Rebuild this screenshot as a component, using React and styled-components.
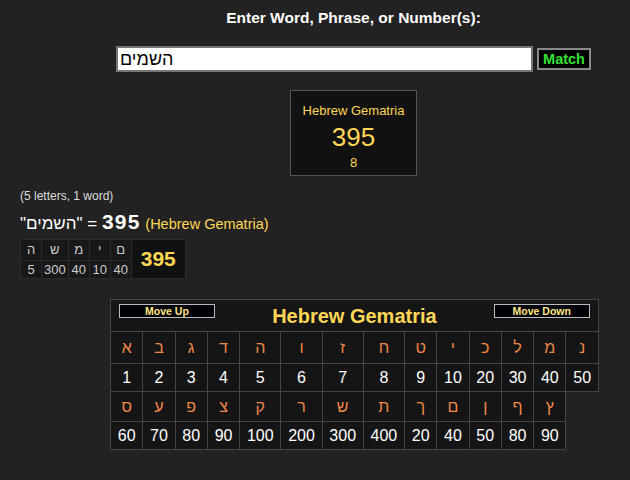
import React from "react";
import styled, { createGlobalStyle } from "styled-components";

const GlobalStyle = createGlobalStyle`
  html, body { margin: 0; padding: 0; background: #222222; }
  body { font-family: "Liberation Sans", Arial, "DejaVu Sans", sans-serif; color: #ffffff; }
`;

const Page = styled.div`
  padding-top: 9px;
  width: 630px;
  height: 480px;
  box-sizing: border-box;
  overflow: hidden;
`;

const CenterCol = styled.div`
  margin-left: 77px;
  display: flex;
  flex-direction: column;
  align-items: center;
`;

const Heading = styled.div`
  font-size: 15.5px;
  font-weight: bold;
  line-height: 18px;
  color: #ffffff;
`;

const SearchRow = styled.div`
  margin-top: 19px;
  display: flex;
  align-items: center;
  gap: 4px;
`;

const WordInput = styled.input`
  width: 417px;
  height: 26px;
  box-sizing: border-box;
  border: 2px solid #767676;
  background: #ffffff;
  color: #000000;
  font-family: "Liberation Sans", Arial, "DejaVu Sans", sans-serif;
  font-size: 18px;
  padding: 0 2px;
  outline: none;
`;

const MatchButton = styled.button`
  width: 54px;
  height: 22px;
  box-sizing: border-box;
  background: #000000;
  border: 2px solid #8a8a8a;
  color: #33e033;
  font-family: "Liberation Sans", Arial, sans-serif;
  font-weight: bold;
  font-size: 14.5px;
  padding: 0;
  line-height: 18px;
`;

const GemBox = styled.div`
  margin-top: 18px;
  width: 127px;
  height: 86px;
  box-sizing: border-box;
  border: 1px solid #555555;
  background: #111111;
  display: flex;
  flex-direction: column;
  align-items: center;
  padding-top: 12px;
  color: #ffd755;
`;

const GemLabel = styled.div`
  font-size: 13px;
  line-height: 15px;
`;

const GemValue = styled.div`
  font-size: 26px;
  line-height: 28px;
  margin-top: 5px;
`;

const GemSub = styled.div`
  font-size: 13px;
  line-height: 15px;
  margin-top: 4px;
`;

const Left = styled.div`
  padding-left: 20px;
  margin-top: 13px;
`;

const Info = styled.div`
  font-size: 12px;
  line-height: 14px;
  color: #dddddd;
`;

const ResultLine = styled.div`
  margin-top: 8px;
  font-size: 17px;
  line-height: 22px;
  color: #ffffff;
`;

const HebrewWord = styled.bdi`
  unicode-bidi: isolate;
`;

const BigNum = styled.span`
  font-size: 21px;
  font-weight: bold;
  letter-spacing: 1.2px;
`;

const CipherName = styled.span`
  font-size: 14.5px;
  color: #ffd755;
`;

const Breakdown = styled.table`
  margin-top: 4px;
  border-collapse: separate;
  border-spacing: 1px;
  background: #2a2a2a;
`;

const BdCell = styled.td`
  background: #181818;
  color: #cccccc;
  font-size: 13px;
  text-align: center;
  padding: 0 2px;
  min-width: 16px;
  height: ${(p) => (p.$top ? "20px" : "17px")};
  line-height: 16px;
`;

const BdTotal = styled.td`
  background: #111111;
  color: #ffd755;
  font-size: 21px;
  font-weight: bold;
  text-align: center;
  padding: 0 9px;
`;

const TableWrap = styled.div`
  margin-top: 20px;
  margin-left: 110px;
`;

const Chart = styled.table`
  border-collapse: collapse;
`;

const HeadCell = styled.td`
  background: #151515;
  border: 1px solid #444444;
  height: 31px;
  padding: 0;
`;

const HeadInner = styled.div`
  display: flex;
  justify-content: space-between;
  align-items: flex-start;
  padding: 0 8px;
  height: 31px;
`;

const MoveButton = styled.button`
  margin-top: 4px;
  width: 96px;
  height: 14px;
  box-sizing: border-box;
  background: #000008;
  border: 1px solid #bbbbbb;
  color: #ffe680;
  font-family: "Liberation Sans", Arial, sans-serif;
  font-weight: bold;
  font-size: 10.5px;
  line-height: 12px;
  padding: 0;
`;

const Title = styled.div`
  align-self: center;
  font-size: 20px;
  font-weight: bold;
  color: #ffd755;
  margin-top: 2px;
`;

const LetterCell = styled.td`
  background: #151515;
  border: 1px solid #444444;
  color: #f08848;
  font-size: 16px;
  text-align: center;
  padding: 0 6.75px;
  height: ${(p) => p.$h}px;
`;

const NumCell = styled.td`
  background: #151515;
  border: 1px solid #444444;
  color: #ffffff;
  font-size: 16px;
  text-align: center;
  padding: 0 6.75px;
  height: 27px;
`;

const row1 = [
  ["א", 1], ["ב", 2], ["ג", 3], ["ד", 4], ["ה", 5], ["ו", 6], ["ז", 7],
  ["ח", 8], ["ט", 9], ["י", 10], ["כ", 20], ["ל", 30], ["מ", 40], ["נ", 50],
];
const row2 = [
  ["ס", 60], ["ע", 70], ["פ", 80], ["צ", 90], ["ק", 100], ["ר", 200], ["ש", 300],
  ["ת", 400], ["ך", 20], ["ם", 40], ["ן", 50], ["ף", 80], ["ץ", 90],
];
const word = [["ה", 5], ["ש", 300], ["מ", 40], ["י", 10], ["ם", 40]];

export default function App() {
  return (
    <>
      <GlobalStyle />
      <Page>
        <CenterCol>
          <Heading>Enter Word, Phrase, or Number(s):</Heading>
          <SearchRow>
            <WordInput defaultValue="השמים" />
            <MatchButton>Match</MatchButton>
          </SearchRow>
          <GemBox>
            <GemLabel>Hebrew Gematria</GemLabel>
            <GemValue>395</GemValue>
            <GemSub>8</GemSub>
          </GemBox>
        </CenterCol>
        <Left>
          <Info>(5 letters, 1 word)</Info>
          <ResultLine>
            "<HebrewWord>השמים</HebrewWord>" = <BigNum>395</BigNum>{" "}
            <CipherName>(Hebrew Gematria)</CipherName>
          </ResultLine>
          <Breakdown>
            <tbody>
              <tr>
                {word.map(([l], i) => (
                  <BdCell key={i} $top>{l}</BdCell>
                ))}
                <BdTotal rowSpan={2}>395</BdTotal>
              </tr>
              <tr>
                {word.map(([, v], i) => (
                  <BdCell key={i}>{v}</BdCell>
                ))}
              </tr>
            </tbody>
          </Breakdown>
        </Left>
        <TableWrap>
          <Chart>
            <tbody>
              <tr>
                <HeadCell colSpan={14}>
                  <HeadInner>
                    <MoveButton>Move Up</MoveButton>
                    <Title>Hebrew Gematria</Title>
                    <MoveButton>Move Down</MoveButton>
                  </HeadInner>
                </HeadCell>
              </tr>
              <tr>
                {row1.map(([l], i) => (
                  <LetterCell key={i} $h={31}>{l}</LetterCell>
                ))}
              </tr>
              <tr>
                {row1.map(([, v], i) => (
                  <NumCell key={i}>{v}</NumCell>
                ))}
              </tr>
              <tr>
                {row2.map(([l], i) => (
                  <LetterCell key={i} $h={29}>{l}</LetterCell>
                ))}
              </tr>
              <tr>
                {row2.map(([, v], i) => (
                  <NumCell key={i}>{v}</NumCell>
                ))}
              </tr>
            </tbody>
          </Chart>
        </TableWrap>
      </Page>
    </>
  );
}
